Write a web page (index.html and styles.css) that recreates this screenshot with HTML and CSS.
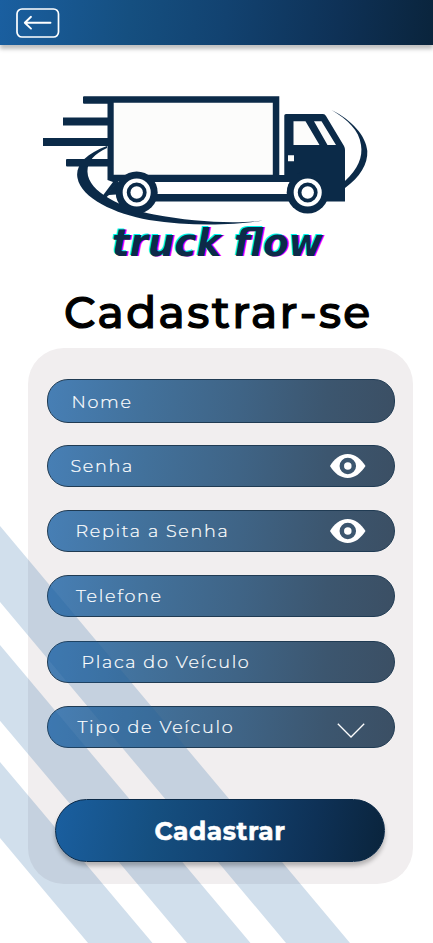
FILE: index.html
```html
<!DOCTYPE html>
<html lang="pt-BR">
<head>
<meta charset="utf-8">
<meta name="viewport" content="width=device-width">
<title>Truck Flow</title>
<link rel="stylesheet" href="styles.css">
</head>
<body>
<header class="topbar">
  <button class="back" aria-label="Voltar">
    <svg width="44" height="30" viewBox="0 0 44 30" fill="none" stroke="#fff" stroke-linecap="round" stroke-linejoin="round">
      <rect x="1" y="1" width="41.5" height="28" rx="5" stroke-width="1.7"/>
      <path d="M34.5 14.7H9M15 8.8l-6.2 5.9 6.2 5.9" stroke-width="1.9"/>
    </svg>
  </button>
</header>
<main>
  <svg class="logo" viewBox="0 80 433 190" role="img">
    <g fill="#0b2a48">
      <path d="M107 146C85 154 75 166 77.500 178C81 198 115 214 149 220C192 227 237 225 263 220.500C235 224 193 222 154 214.500C122 208 88 192 87.500 172C87 162 94 154 107 148Z"/>
      <path d="M331.500 110C352 120 366 136 367.300 151C368 164 360 177 345 188V181C358 169 363 157 361 145C359 130 348 120 331.500 110Z"/>
      <path d="M113 101H275V178H113Z" fill="#fcfcfb"/>
      <path d="M84 96.300H279.300V175H284.300V115.500Q284.300 114 286 114H323Q325 114 326 116L344 146Q345 148 345 150V201.500H150V194H287Q287 187 290 182H148L118 181L103 201L101 198L113 182L107.500 180V166.500H67Q66 166.500 66 165.500V160Q66 159 67 159H107.500V146H43V138H107.500V125.500H63V117.500H107.500V103.800H84Q83 103.800 83 102.800V97.300Q83 96.300 84 96.300ZM113.700 102.800V174.700H272.800V102.800Z" fill-rule="evenodd"/>
      <path d="M103 200L118 180L123 194L109 195Z"/>
      <circle cx="136.700" cy="192.500" r="21"/>
      <circle cx="307.700" cy="192.500" r="21"/>
    </g>
    <path d="M293.500 121.300H305.500L319.500 145H293.500ZM314 121.300H321.500L336 145H327.500ZM288 155.300h6v6h-6Z" fill="#fcfcfb"/>
    <g fill="#0b2a48" stroke="#fff" stroke-width="4.100">
      <circle cx="136.700" cy="192.500" r="12"/>
      <circle cx="307.700" cy="192.500" r="12"/>
    </g>
    <circle cx="136.700" cy="192.500" r="6.200" fill="#fff"/>
    <circle cx="307.700" cy="192.500" r="6.200" fill="#fff"/>
    <text class="brand" x="112" y="255.500" textLength="211" lengthAdjust="spacingAndGlyphs">truck flow</text>
  </svg>
  <h1>Cadastrar-se</h1>
  <form class="panel">
    <div class="field first"><span class="nome">Nome</span></div>
    <div class="field"><span class="senha">Senha</span>
      <svg class="eye" width="36" height="24" viewBox="0 0 36 24"><path d="M0 12C4 5 10 0 17.700 0S31 5 35.500 12C31 19 25 24 17.700 24S4 19 0 12Z" fill="#fff"/><circle cx="17.800" cy="12" r="6" fill="#fff" stroke="#3c566f" stroke-width="4.500"/></svg></div>
    <div class="field"><span class="repita">Repita a Senha</span>
      <svg class="eye" width="36" height="24" viewBox="0 0 36 24"><path d="M0 12C4 5 10 0 17.700 0S31 5 35.500 12C31 19 25 24 17.700 24S4 19 0 12Z" fill="#fff"/><circle cx="17.800" cy="12" r="6" fill="#fff" stroke="#3c566f" stroke-width="4.500"/></svg></div>
    <div class="field"><span class="telefone">Telefone</span></div>
    <div class="field"><span class="placa">Placa do Veículo</span></div>
    <div class="field"><span class="tipo">Tipo de Veículo</span>
      <svg class="chevron" width="28" height="15" viewBox="0 0 28 15"><path d="M.8.8L14 14 27.200.8" fill="none" stroke="#fff" stroke-width="1.300"/></svg></div>
    <button class="submit" type="button">Cadastrar</button>
  </form>
</main>
<svg class="stripes" viewBox="0 0 433 943" aria-hidden="true">
  <path d="M0 526L350 943H286L0 602ZM0 645L250.500 943H187L0 720.700ZM0 762L152.500 943H88L0 838Z" fill="#1a5fa0" fill-opacity=".2"/>
</svg>
</body>
</html>
```

FILE: styles.css
```css
* { box-sizing: border-box; }

body {
  position: relative;
  margin: 0;
  width: 433px;
  height: 943px;
  overflow: hidden;
  background: #fff;
  font-family: Montserrat, Inter, sans-serif;
}

button {
  border: 0;
  padding: 0;
  background: none;
  font-family: inherit;
}

.topbar {
  height: 45px;
  padding: 8px 16px;
  background: linear-gradient(97deg, #1a5fa0 0%, #154f80 30%, #124270 52%, #0e3156 78%, #0a243c 100%);
  box-shadow: 0 4px 4px rgba(0, 0, 0, .25);
}

.back { display: block; }
.back svg { display: block; }

.logo {
  display: block;
  width: 433px;
  height: 190px;
  margin-top: 35px;
}

.brand {
  font: italic bold 37px "DejaVu Sans", sans-serif;
  fill: #0d2a48;
  text-shadow: -1.5px -.5px 0 #00f6f0, 1.5px .5px 0 #f0f;
}

h1 {
  margin: 15px 0 0 64px;
  height: 55px;
  font-size: 44px;
  line-height: 55px;
  font-weight: 500;
  -webkit-text-stroke: 1.2px #000;
  letter-spacing: 2.4px;
  white-space: nowrap;
  color: #000;
}

.panel {
  display: flex;
  flex-direction: column;
  gap: 23.3px;
  width: 385px;
  height: 536px;
  margin: 8px 0 0 28px;
  padding: 31px 18.5px 0 19px;
  border-radius: 36px;
  background: #f1eeef;
}

.field {
  display: flex;
  align-items: center;
  justify-content: space-between;
  flex: none;
  height: 42px;
  padding: 0 28px 0 23px;
  border: 1px solid #203b53;
  border-radius: 21px;
  background: linear-gradient(97deg, #477fb5 0%, #42719b 28%, #3f6486 55%, #3c566f 80%, #3b4f64 100%);
  color: #fff;
  font-size: 17.6px;
  font-weight: 300;
  -webkit-text-stroke: .2px #fff;
  letter-spacing: 1.65px;
  white-space: nowrap;
}

.field.first { height: 43.5px; margin-bottom: -1.200px; }
.field span { position: relative; z-index: 2; }

.nome { margin: 1px 0 0 .5px; }
.senha { margin-left: -.5px; }
.repita { margin-left: 4.500px; }
.telefone { margin: -2px 0 0 5px; }
.placa { margin-left: 10.500px; }
.tipo { margin-left: 6.500px; }

.chevron { margin: 7px 1px 0 0; }

.submit {
  flex: none;
  width: 330px;
  height: 63px;
  margin: 28px 0 0 8px;
  border: 1px solid #0b2a48;
  border-radius: 32px;
  background: linear-gradient(100deg, #1a5fa0 0%, #154f80 30%, #124270 52%, #0e3156 78%, #0a243c 100%);
  box-shadow: 0 4px 4px rgba(0, 0, 0, .25);
  color: #fff;
  font-size: 25px;
  font-weight: 700;
  -webkit-text-stroke: .5px #fff;
  letter-spacing: .5px;
  position: relative;
  z-index: 2;
}

.stripes {
  position: absolute;
  inset: 0;
  z-index: 1;
  width: 433px;
  height: 943px;
  pointer-events: none;
}
```
